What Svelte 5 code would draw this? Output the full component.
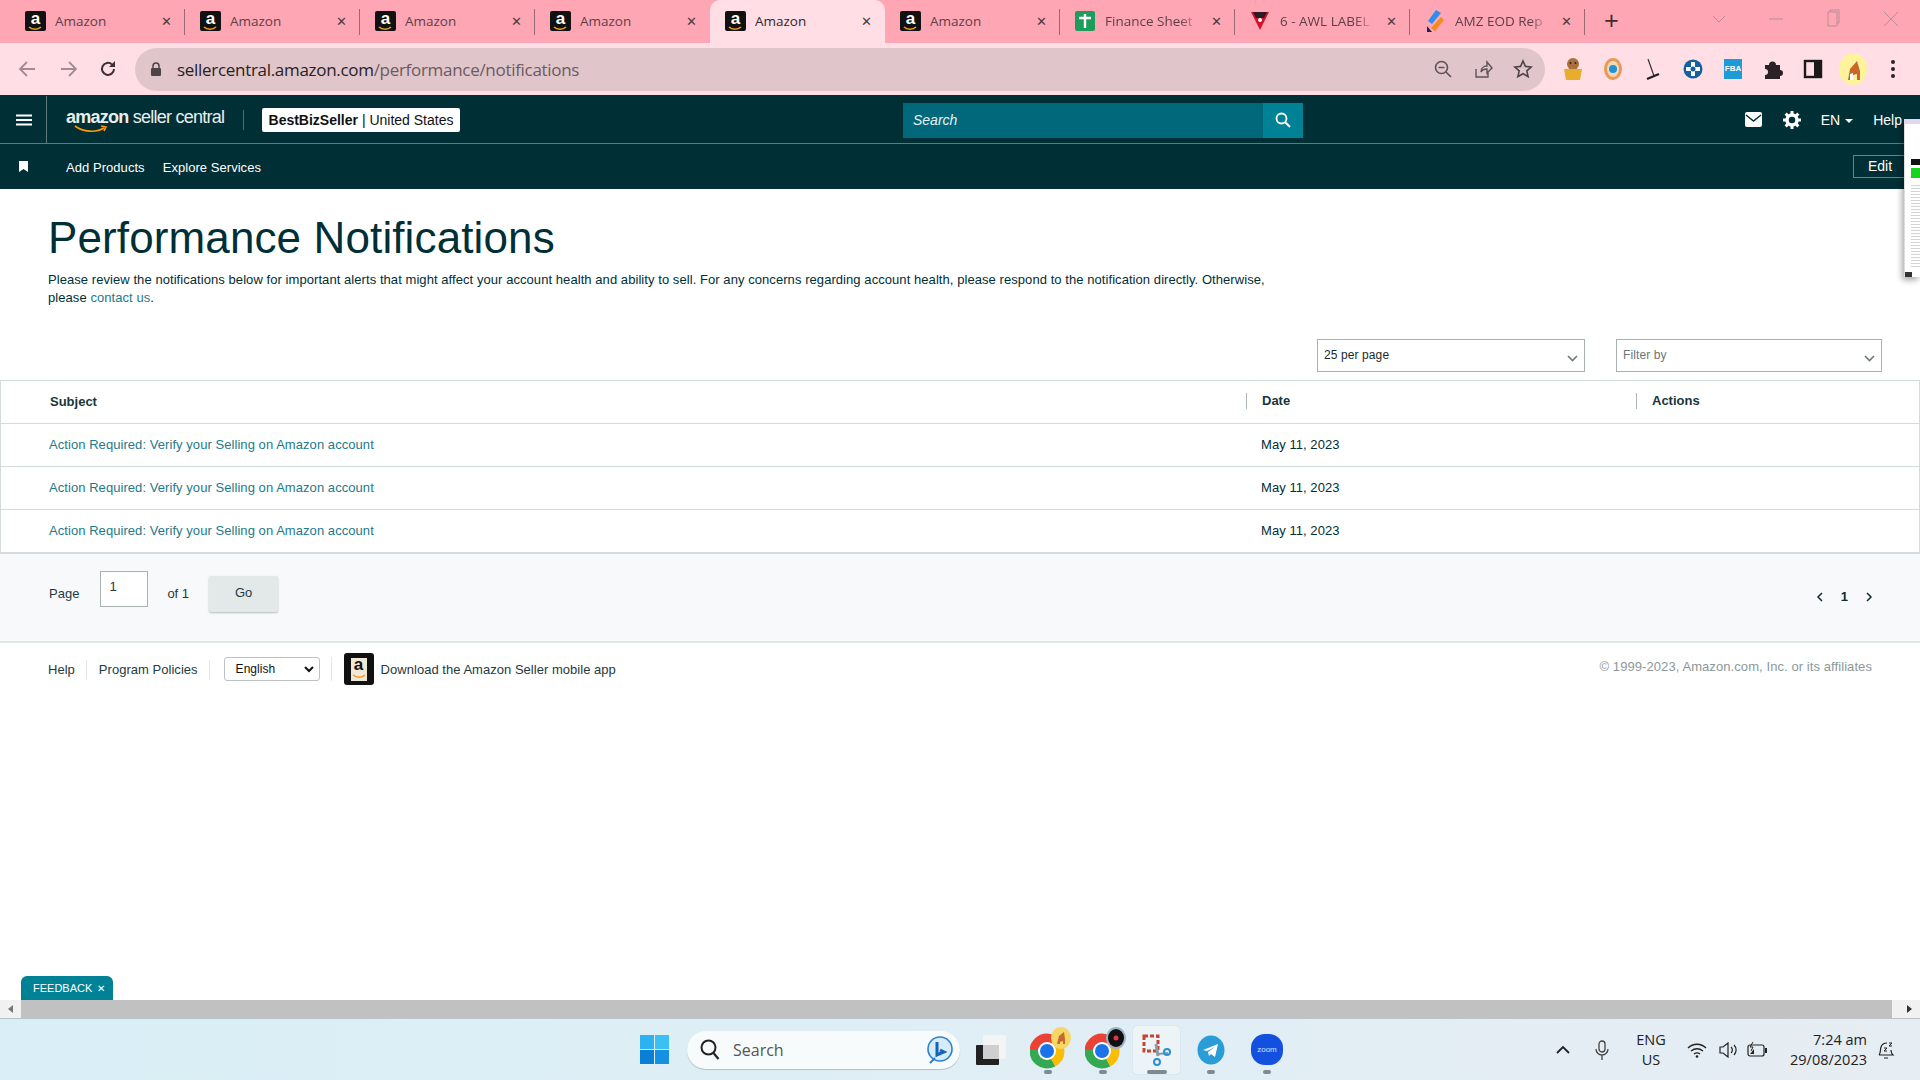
<script>
  const tabs = [
    { title: "Amazon", icon: "amazon" },
    { title: "Amazon", icon: "amazon" },
    { title: "Amazon", icon: "amazon" },
    { title: "Amazon", icon: "amazon" },
    { title: "Amazon", icon: "amazon", active: true },
    { title: "Amazon", icon: "amazon" },
    { title: "Finance Sheet", icon: "sheet", fade: true },
    { title: "6 - AWL LABEL", icon: "awl", fade: true },
    { title: "AMZ EOD Rep", icon: "eod", fade: true },
  ];

  const rows = [
    { subject: "Action Required: Verify your Selling on Amazon account", date: "May 11, 2023" },
    { subject: "Action Required: Verify your Selling on Amazon account", date: "May 11, 2023" },
    { subject: "Action Required: Verify your Selling on Amazon account", date: "May 11, 2023" },
  ];
</script>

{#snippet chrome()}
  <svg class="tb-app" width="36" height="38" viewBox="0 0 36 38">
    <circle cx="17" cy="20" r="13" fill="none" stroke="#ea4335" stroke-width="9" stroke-dasharray="28 54" stroke-dashoffset="42" />
    <circle cx="17" cy="20" r="13" fill="none" stroke="#fbbc04" stroke-width="9" stroke-dasharray="28 54" stroke-dashoffset="14" />
    <circle cx="17" cy="20" r="13" fill="none" stroke="#34a853" stroke-width="9" stroke-dasharray="28 54" stroke-dashoffset="-14" />
    <circle cx="17" cy="20" r="9" fill="#fff" />
    <circle cx="17" cy="20" r="7" fill="#1a73e8" />
  </svg>
{/snippet}

<div class="screen">
  <div class="tabstrip">
    {#each tabs as tab, i}
      <div class="tab" class:active={tab.active} class:nosep={tab.active || (tabs[i + 1] && tabs[i + 1].active)}>
        {#if tab.icon === "amazon"}
          <span class="fav-a">a<svg class="fav-smile" width="14" height="5" viewBox="0 0 14 5"><path d="M1 1c3 3 9 3 12 0" fill="none" stroke="#f29a1f" stroke-width="1.6" /></svg></span>
        {:else if tab.icon === "sheet"}
          <svg class="fav" width="20" height="20" viewBox="0 0 20 20"><rect width="20" height="20" rx="2" fill="#1e9c5b" /><path d="M4 7h12M10 3v14" stroke="#fff" stroke-width="2.4" /></svg>
        {:else if tab.icon === "awl"}
          <svg class="fav" width="20" height="20" viewBox="0 0 20 20"><path d="M1 1h18L10 19z" fill="#d3122a" /><path d="M3 1h14l-3 6H6z" fill="#2a1a2a" /><circle cx="10" cy="9" r="2" fill="#fff" /></svg>
        {:else}
          <svg class="fav" width="20" height="24" viewBox="0 0 20 24"><path d="M11 1l5 3-9 11-4-3z" fill="#2f8df0" /><path d="M16 8l3 3-9 11-4-3z" fill="#f58a1f" /><path d="M2 17l5 6H2z" fill="#25205a" /></svg>
        {/if}
        <span class="tab-title" class:fade={tab.fade}>{tab.title}</span>
        <span class="tab-x">✕</span>
      </div>
    {/each}
    <span class="newtab">+</span>
    <div class="winctl">
      <svg width="14" height="10" viewBox="0 0 14 10"><path d="M1 2l6 6 6-6" fill="none" stroke="#b98d96" /></svg>
      <svg class="ctl-min" width="14" height="10" viewBox="0 0 14 10"><path d="M0 5h14" stroke="#b98d96" /></svg>
      <svg class="ctl-max" width="14" height="20" viewBox="0 0 14 20"><path d="M2 3h9v14H2zM4 3V1h9v13h-2" fill="none" stroke="#b98d96" /></svg>
      <svg class="ctl-close" width="14" height="14" viewBox="0 0 14 14"><path d="M0 0l14 14M14 0L0 14" stroke="#b98d96" /></svg>
    </div>
  </div>

  <div class="toolbar">
    <svg class="nav-ic" width="20" height="20" viewBox="0 0 20 20"><path d="M17 10H3m6-7l-7 7 7 7" fill="none" stroke="#a38b91" stroke-width="1.8" /></svg>
    <svg class="nav-ic" width="20" height="20" viewBox="0 0 20 20"><path d="M3 10h14m-6-7l7 7-7 7" fill="none" stroke="#a38b91" stroke-width="1.8" /></svg>
    <svg class="nav-ic" width="20" height="20" viewBox="0 0 20 20"><path d="M16 10a6 6 0 1 1-2-4.6" fill="none" stroke="#3a3035" stroke-width="2" /><path d="M17 2v6h-6z" fill="#3a3035" /></svg>
    <div class="omnibox">
      <svg width="12" height="14" viewBox="0 0 12 14"><path d="M3 6V4a3 3 0 0 1 6 0v2" fill="none" stroke="#4e4448" stroke-width="1.5" /><rect x="1" y="6" width="10" height="8" rx="1" fill="#4e4448" /></svg>
      <span class="url"><b>sellercentral.amazon.com</b>/performance/notifications</span>
      <div class="omni-icons">
        <svg width="20" height="20" viewBox="0 0 20 20"><circle cx="8.5" cy="8.5" r="6" fill="none" stroke="#5c5357" stroke-width="1.6" /><path d="M5.5 8.5h6M13 13l5 5" stroke="#5c5357" stroke-width="1.6" /></svg>
        <svg width="20" height="20" viewBox="0 0 20 20"><path d="M3 10v8h12v-5M8 13c0-4 3-6 6-6V3l5 6-5 5v-4c-3 0-5 1-6 3z" fill="none" stroke="#5c5357" stroke-width="1.4" /></svg>
        <svg width="20" height="20" viewBox="0 0 20 20"><path d="M10 2l2.4 5.4 5.8.6-4.4 3.900 1.300 5.700L10 14.700l-5.100 2.900 1.300-5.700L1.800 8l5.800-.6z" fill="none" stroke="#4e4448" stroke-width="1.6" /></svg>
      </div>
    </div>
    <div class="exts">
      <svg width="22" height="24" viewBox="0 0 22 24"><ellipse cx="11" cy="7" rx="6" ry="6" fill="#a9703a" /><circle cx="8.500" cy="6" r="1" fill="#222" /><circle cx="13.500" cy="6" r="1" fill="#222" /><path d="M2 12h18l-2 11H4z" fill="#e8ad2c" /></svg>
      <svg width="22" height="24" viewBox="0 0 22 24"><ellipse cx="11" cy="12" rx="9" ry="11" fill="#e59a5a" /><ellipse cx="11" cy="12" rx="6" ry="8" fill="#f3d8b8" /><circle cx="11" cy="12" r="4" fill="#1e93d8" /></svg>
      <svg width="22" height="24" viewBox="0 0 22 24"><path d="M6 2l6 17" stroke="#333" stroke-width="1.2" /><path d="M5 22l12-5" stroke="#222" stroke-width="2.400" /></svg>
      <svg width="22" height="24" viewBox="0 0 22 24"><circle cx="11" cy="12" r="9.500" fill="#14609c" /><path d="M11 5v14M4 12h14" stroke="#fff" stroke-width="4" /><circle cx="11" cy="12" r="2.500" fill="#14609c" /></svg>
      <span class="fba">FBA</span>
      <svg width="22" height="24" viewBox="0 0 22 24"><path d="M3 8h4a3 3 0 0 1 7 0h4v5a3 3 0 0 1 0 6v3H3v-4a3 3 0 0 0 0-6z" fill="#2a2226" /></svg>
      <svg width="22" height="24" viewBox="0 0 22 24"><rect x="3" y="4" width="16" height="16" fill="none" stroke="#1a1a1a" stroke-width="2.400" /><rect x="12" y="4" width="7" height="16" fill="#1a1a1a" /></svg>
      <svg width="28" height="32" viewBox="0 0 28 32"><ellipse cx="14" cy="16" rx="14" ry="16" fill="#fdf39a" /><path d="M9 27l2-11 7-8 3 10v9h-3v-6l-4 1v5z" fill="#c9682e" /><path d="M11 27v-6l3-1v7z" fill="#fff" /></svg>
      <svg width="22" height="24" viewBox="0 0 22 24"><circle cx="11" cy="5" r="2" fill="#2a2226" /><circle cx="11" cy="12" r="2" fill="#2a2226" /><circle cx="11" cy="19" r="2" fill="#2a2226" /></svg>
    </div>
  </div>

  <header class="topbar">
    <div class="menu-cell">
      <svg width="16" height="12" viewBox="0 0 16 12"><path d="M0 1.500h16M0 6h16M0 10.500h16" stroke="#fff" stroke-width="1.800" /></svg>
    </div>
    <div class="logo">
      <b>amazon</b> seller central
      <svg class="smile" width="34" height="8" viewBox="0 0 34 8"><path d="M1 1c8 6 21 7 29 2M27 1l5 1-2 4" fill="none" stroke="#ff9900" stroke-width="1.600" /></svg>
    </div>
    <span class="logo-sep"></span>
    <div class="account"><b>BestBizSeller</b> | United States</div>
    <div class="search">
      <span class="search-field">Search</span>
      <span class="search-btn">
        <svg width="16" height="16" viewBox="0 0 16 16"><circle cx="6.500" cy="6.500" r="5" fill="none" stroke="#fff" stroke-width="1.800" /><path d="M10 10l5 5" stroke="#fff" stroke-width="2" /></svg>
      </span>
    </div>
    <div class="top-right">
      <svg width="17" height="15" viewBox="0 0 17 15"><rect width="17" height="15" rx="2" fill="#fff" /><path d="M1 3l7.500 6L16 3" fill="none" stroke="#002f36" stroke-width="1.500" /></svg>
      <svg class="gear" width="18" height="18" viewBox="0 0 18 18"><circle cx="9" cy="9" r="5" fill="none" stroke="#fff" stroke-width="3.500" /><path d="M9 0v4M9 14v4M0 9h4M14 9h4M2.600 2.600l3 3M12.400 12.400l3 3M15.400 2.600l-3 3M5.600 12.400l-3 3" stroke="#fff" stroke-width="3" /></svg>
      <span class="lang">EN<i class="caret"></i></span>
      <span class="help">Help</span>
    </div>
  </header>

  <nav class="navbar">
    <svg class="bookmark" width="9" height="11" viewBox="0 0 9 11"><path d="M0 0h9v11L4.500 8 0 11z" fill="#fff" /></svg>
    <span class="nav-link">Add Products</span>
    <span class="nav-link">Explore Services</span>
    <span class="edit">Edit</span>
  </nav>

  <main class="page">
    <div class="intro">
      <h1>Performance Notifications</h1>
      <p>Please review the notifications below for important alerts that might affect your account health and ability to sell. For any concerns regarding account health, please respond to the notification directly. Otherwise, please <a href="#top">contact us</a>.</p>
    </div>

    <div class="filters">
      <div class="dropdown per-page">25 per page
        <svg width="11" height="7" viewBox="0 0 11 7"><path d="M1 1l4.500 4.500L10 1" fill="none" stroke="#6c7778" stroke-width="1.600" /></svg>
      </div>
      <div class="dropdown filter-by">Filter by
        <svg width="11" height="7" viewBox="0 0 11 7"><path d="M1 1l4.500 4.500L10 1" fill="none" stroke="#6c7778" stroke-width="1.600" /></svg>
      </div>
    </div>

    <div class="table">
      <div class="row head">
        <div class="cell subject">Subject</div>
        <div class="cell col-sep">Date</div>
        <div class="cell col-sep">Actions</div>
      </div>
      {#each rows as row}
        <div class="row">
          <div class="cell"><a href="#top">{row.subject}</a></div>
          <div class="cell date">{row.date}</div>
          <div class="cell"></div>
        </div>
      {/each}
    </div>

    <div class="pager">
      <span class="page-label">Page</span>
      <span class="page-input">1</span>
      <span class="of">of 1</span>
      <span class="go">Go</span>
      <div class="pages">
        <svg width="8" height="10" viewBox="0 0 8 10"><path d="M6 1L2 5l4 4" fill="none" stroke="#0f2a2e" stroke-width="1.500" /></svg>
        <b>1</b>
        <svg width="8" height="10" viewBox="0 0 8 10"><path d="M2 1l4 4-4 4" fill="none" stroke="#0f2a2e" stroke-width="1.500" /></svg>
      </div>
    </div>

    <footer class="footer">
      <span class="foot-link first">Help</span>
      <span class="foot-link">Program Policies</span>
      <div class="foot-lang">
        <span class="lang-select">English
          <svg width="10" height="7" viewBox="0 0 10 7"><path d="M1 1l4 4 4-4" fill="none" stroke="#111" stroke-width="2" /></svg>
        </span>
      </div>
      <span class="app-icon">a<svg width="14" height="5" viewBox="0 0 14 5"><path d="M1 1c3 3 9 3 12 0" fill="none" stroke="#f29a1f" stroke-width="1.400" /></svg></span>
      <span class="app-text">Download the Amazon Seller mobile app</span>
      <span class="copyright">© 1999-2023, Amazon.com, Inc. or its affiliates</span>
    </footer>

    <div class="thumb">
      <span class="th-top"></span>
      <span class="th-black"></span>
      <span class="th-green"></span>
      <span class="th-lines"></span>
      <span class="th-start"></span>
    </div>
    <div class="feedback">FEEDBACK <span>✕</span></div>
  </main>

  <div class="hscroll">
    <svg width="21" height="18" viewBox="0 0 21 18"><path d="M13 5v8L8 9z" fill="#777" /></svg>
    <div class="hthumb"></div>
    <svg width="28" height="18" viewBox="0 0 28 18"><path d="M15 5v8l5-4z" fill="#333" /></svg>
  </div>

  <div class="taskbar">
    <svg class="winlogo" width="29" height="29" viewBox="0 0 29 29">
      <rect width="14" height="14" fill="#2cb2f0" /><rect x="15" width="14" height="14" fill="#3cc0f4" />
      <rect y="15" width="14" height="14" fill="#0a7fd6" /><rect x="15" y="15" width="14" height="14" fill="#1590e2" />
    </svg>
    <div class="tb-search">
      <svg width="20" height="21" viewBox="0 0 20 21"><circle cx="8.500" cy="8.500" r="7" fill="none" stroke="#222" stroke-width="2" /><path d="M13.500 14l5 6" stroke="#222" stroke-width="2.200" /></svg>
      <span>Search</span>
      <svg class="bing" width="26" height="28" viewBox="0 0 26 28"><circle cx="13" cy="13" r="12" fill="#d7ecfa" stroke="#2a7fd0" stroke-width="1.600" /><path d="M10 6v13l7-3-4-2" fill="none" stroke="#1464b8" stroke-width="3" /><path d="M3 27l5-5" stroke="#2a7fd0" stroke-width="2" /></svg>
    </div>
    <svg class="tb-app squares" width="30" height="30" viewBox="0 0 30 30"><rect x="7" y="0" width="23" height="24" rx="2" fill="#f4f4f4" /><rect x="0" y="10" width="23" height="20" rx="1" fill="#222" /><rect x="7" y="10" width="16" height="14" fill="#cfcfcf" /></svg>

    <div class="tb-slot first-chrome">
      {@render chrome()}
      <svg class="tb-badge" width="20" height="22" viewBox="0 0 20 22"><ellipse cx="10" cy="11" rx="10" ry="11" fill="#f6d765" /><path d="M6 17l2-8 5-4 1 7v5h-2v-3l-3 1v2z" fill="#c9682e" /></svg>
      <i class="dot"></i>
    </div>
    <div class="tb-slot second-chrome">
      {@render chrome()}
      <svg class="tb-badge" width="20" height="22" viewBox="0 0 20 22"><ellipse cx="10" cy="11" rx="10" ry="11" fill="#9fb3c6" /><ellipse cx="10" cy="11" rx="8" ry="9" fill="#111" /><circle cx="10" cy="11" r="2.500" fill="#e2344a" /></svg>
      <i class="dot"></i>
    </div>
    <div class="tb-snip">
      <svg width="30" height="32" viewBox="0 0 30 32">
        <rect x="2" y="2" width="14" height="15" fill="none" stroke="#c8432e" stroke-width="3" stroke-dasharray="4 2" />
        <path d="M14 10l2 12" stroke="#8c9aa6" stroke-width="3" /><path d="M16 20l10-1" stroke="#8c9aa6" stroke-width="2" />
        <circle cx="25" cy="18" r="3" fill="none" stroke="#2b8fd6" stroke-width="2" /><circle cx="15" cy="28" r="3" fill="none" stroke="#2b8fd6" stroke-width="2" />
      </svg>
      <i class="dot wide"></i>
    </div>
    <div class="tb-slot telegram">
      <svg width="28" height="30" viewBox="0 0 28 30"><ellipse cx="14" cy="15" rx="13.500" ry="14.500" fill="#2b9dd6" /><path d="M6 15l15-6-3 13-4-3-2 2-1-4 7-5-8 4z" fill="#fff" /></svg>
      <i class="dot"></i>
    </div>
    <div class="tb-slot zoom">
      <span class="zoom-ic">zoom</span>
      <i class="dot"></i>
    </div>

    <div class="tray">
      <svg class="t-caret" width="14" height="9" viewBox="0 0 14 9"><path d="M1 8l6-6 6 6" fill="none" stroke="#222" stroke-width="1.800" /></svg>
      <svg class="t-mic" width="14" height="20" viewBox="0 0 14 20"><rect x="4" y="1" width="6" height="11" rx="3" fill="none" stroke="#444" stroke-width="1.300" /><path d="M1 9a6 6 0 0 0 12 0M7 15v5" fill="none" stroke="#444" stroke-width="1.300" /></svg>
      <div class="t-lang">ENG<br />US</div>
      <svg class="t-wifi" width="20" height="16" viewBox="0 0 20 16"><path d="M1 6c5-5 13-5 18 0M4 9c4-3 8-3 12 0M7 12c2-1.500 4-1.500 6 0" fill="none" stroke="#222" stroke-width="1.300" /><circle cx="10" cy="14.500" r="1.300" fill="#222" /></svg>
      <svg class="t-vol" width="20" height="16" viewBox="0 0 20 16"><path d="M1 5h3l5-4v14l-5-4H1z" fill="none" stroke="#222" stroke-width="1.200" /><path d="M12 5a4 4 0 0 1 0 6M15 3a7 7 0 0 1 0 10" fill="none" stroke="#222" stroke-width="1.200" /></svg>
      <svg class="t-bat" width="21" height="16" viewBox="0 0 21 16"><rect x="1" y="3" width="16" height="11" rx="2" fill="none" stroke="#222" stroke-width="1.200" /><path d="M3 12l4-5v5z" fill="#222" /><rect x="18" y="6" width="2" height="5" fill="#222" /><path d="M6 0L3 5h3L4 9" fill="none" stroke="#222" /></svg>
      <div class="t-clock"><div>7:24 am</div><div>29/08/2023</div></div>
      <svg class="t-bell" width="18" height="20" viewBox="0 0 18 20"><path d="M2 15c2-2 1-5 2-8s4-4 6-4M2 15h14c-1-1-2-2-2-5M7 18h4" fill="none" stroke="#222" stroke-width="1.200" /><path d="M7 8h3l-3 3h3M12 3h3l-3 3h3" fill="none" stroke="#222" /></svg>
    </div>
  </div>
</div>

<style>
  :global(body) {
    margin: 0;
    font-family: "Liberation Sans", Arial, sans-serif;
    color: #002f36;
  }
  .screen {
    width: 1920px;
    height: 1080px;
    display: flex;
    flex-direction: column;
    overflow: hidden;
  }

  /* browser chrome */
  .tabstrip {
    height: 43px;
    flex: none;
    display: flex;
    align-items: stretch;
    padding-left: 10px;
    background: #ffa6b5;
    box-sizing: border-box;
  }
  .tab {
    width: 175px;
    flex: none;
    box-sizing: border-box;
    display: flex;
    align-items: center;
    padding: 0 0 2px 15px;
    position: relative;
    font-family: "Open Sans", sans-serif;
    font-size: 13.5px;
    color: #5c4046;
  }
  .tab::after {
    content: "";
    position: absolute;
    right: 0;
    top: 9px;
    height: 26px;
    width: 1px;
    background: #9a6a74;
  }
  .tab.nosep::after {
    display: none;
  }
  .tab.active {
    background: #ffdfe5;
    border-radius: 10px 10px 0 0;
    color: #33262a;
  }
  .fav-a {
    width: 21px;
    height: 20px;
    flex: none;
    background: #111;
    border-radius: 2px;
    color: #fff;
    font: bold 17px/15px "Liberation Sans", sans-serif;
    text-align: center;
    position: relative;
    display: block;
  }
  .fav-smile {
    position: absolute;
    left: 3px;
    bottom: 0;
  }
  .fav {
    flex: none;
    margin-right: 1px;
  }
  .tab-title {
    margin-left: 9px;
    width: 94px;
    flex: none;
    white-space: nowrap;
    overflow: hidden;
  }
  .tab-title.fade {
    -webkit-mask-image: linear-gradient(to right, #000 80%, transparent);
    mask-image: linear-gradient(to right, #000 80%, transparent);
  }
  .tab-x {
    font-size: 13px;
    color: #4a3a3e;
    margin-left: 12px;
  }
  .newtab {
    font-family: "Open Sans", sans-serif;
    font-size: 26px;
    line-height: 40px;
    color: #3c2c30;
    margin-left: 19px;
  }
  .winctl {
    margin-left: auto;
    display: flex;
    align-items: center;
    padding: 0 22px 6px 0;
  }
  .ctl-min {
    margin-left: 43px;
  }
  .ctl-max {
    margin-left: 43px;
  }
  .ctl-close {
    margin-left: 44px;
  }

  .toolbar {
    height: 52px;
    flex: none;
    box-sizing: border-box;
    display: flex;
    align-items: center;
    padding: 0 0 0 18px;
    background: #ffdfe5;
  }
  .nav-ic {
    margin-right: 20px;
  }
  .omnibox {
    width: 1410px;
    height: 43px;
    margin-left: -3px;
    box-sizing: border-box;
    display: flex;
    align-items: center;
    padding: 0 12px 0 15px;
    background: #e0c6cb;
    border-radius: 22px;
  }
  .url {
    margin-left: 15px;
    font-family: "Open Sans", sans-serif;
    font-size: 17px;
    letter-spacing: -0.3px;
    color: #6b5a5f;
  }
  .url b {
    font-weight: 400;
    color: #2a2024;
  }
  .omni-icons {
    margin-left: auto;
    display: flex;
    gap: 20px;
  }
  .exts {
    display: flex;
    align-items: center;
    gap: 18px;
    margin-left: 17px;
  }
  .exts svg:nth-child(8) {
    margin: 0 -3px;
  }
  .fba {
    width: 18px;
    height: 20px;
    margin: 0 2px;
    background: #1e9ad6;
    color: #fff;
    font-size: 8px;
    font-weight: bold;
    line-height: 20px;
    text-align: center;
  }

  /* seller central header */
  .topbar {
    height: 49px;
    flex: none;
    box-sizing: border-box;
    display: flex;
    align-items: center;
    padding-top: 1px;
    background: #002f36;
    border-bottom: 1px solid #5f7a7e;
  }
  .menu-cell {
    width: 47px;
    height: 47px;
    box-sizing: border-box;
    flex: none;
    display: flex;
    align-items: center;
    padding-left: 16px;
    border-right: 1px solid #5f7a7e;
  }
  .logo {
    position: relative;
    margin-left: 19px;
    width: 159px;
    flex: none;
    white-space: nowrap;
    font-size: 18px;
    letter-spacing: -0.75px;
    color: #e8eeee;
    padding-bottom: 5px;
  }
  .smile {
    position: absolute;
    left: 8px;
    bottom: 0;
  }
  .logo-sep {
    width: 1px;
    height: 20px;
    margin-left: 18px;
    background: #4f6c70;
  }
  .account {
    margin-left: 18px;
    width: 198px;
    height: 24px;
    box-sizing: border-box;
    background: #fff;
    border-radius: 2px;
    color: #111;
    font-size: 14px;
    line-height: 24px;
    text-align: center;
    white-space: nowrap;
  }
  .search {
    margin: 1px 0 0 443px;
    width: 400px;
    height: 35px;
    flex: none;
    display: flex;
  }
  .search-field {
    flex: 1;
    box-sizing: border-box;
    background: #00687a;
    color: #e6f0f1;
    font-size: 14px;
    font-style: italic;
    line-height: 35px;
    padding-left: 10px;
  }
  .search-btn {
    width: 40px;
    background: #008296;
    display: flex;
    align-items: center;
    justify-content: center;
  }
  .top-right {
    margin-left: auto;
    display: flex;
    align-items: center;
    color: #fff;
    font-size: 14px;
    padding-right: 18px;
  }
  .gear {
    margin-left: 21px;
  }
  .lang {
    margin-left: 20px;
  }
  .caret {
    display: inline-block;
    margin-left: 5px;
    vertical-align: 2px;
    border: 4px solid transparent;
    border-top-color: #fff;
    border-bottom: 0;
  }
  .help {
    margin-left: 20px;
  }

  .navbar {
    height: 45px;
    flex: none;
    box-sizing: border-box;
    display: flex;
    align-items: center;
    padding: 2px 0 0 19px;
    background: #002f36;
    color: #fff;
    font-size: 13px;
  }
  .bookmark {
    margin: -2px 38px 0 0;
  }
  .nav-link {
    margin-right: 18px;
    letter-spacing: 0.05px;
  }
  .edit {
    margin-left: auto;
    width: 52px;
    height: 23px;
    box-sizing: border-box;
    margin-top: -3px;
    margin-right: 15px;
    border: 1px solid #6d8487;
    font-size: 14px;
    line-height: 21px;
    padding-left: 14px;
  }

  /* page */
  .page {
    flex: 1;
    min-height: 0;
    position: relative;
    background: #fff;
  }
  .intro {
    padding: 23px 0 0 48px;
    height: 150px;
    box-sizing: border-box;
  }
  h1 {
    margin: 0;
    font-size: 44px;
    font-weight: 400;
    line-height: 52px;
    letter-spacing: 0.12px;
  }
  p {
    margin: 7px 0 0;
    width: 1235px;
    font-size: 13px;
    line-height: 18px;
    letter-spacing: 0.065px;
  }
  a {
    color: #1d7a8b;
    text-decoration: none;
  }
  .filters {
    display: flex;
    justify-content: flex-end;
    gap: 31px;
    padding-right: 38px;
    height: 41px;
  }
  .dropdown {
    height: 33px;
    box-sizing: border-box;
    border: 1px solid #a9b0b0;
    font-size: 12px;
    line-height: 31px;
    padding-left: 6px;
    position: relative;
    background: #fff;
    letter-spacing: 0.1px;
  }
  .dropdown svg {
    position: absolute;
    right: 6px;
    top: 15px;
  }
  .per-page {
    width: 268px;
    color: #1a2a2c;
  }
  .filter-by {
    width: 266px;
    color: #6c7778;
  }
  .table {
    border: 1px solid #d5dbdb;
    border-bottom-width: 2px;
  }
  .row {
    display: grid;
    grid-template-columns: 1245px 390px 1fr;
    height: 43px;
    box-sizing: border-box;
    padding-bottom: 2px;
    border-top: 1px solid #d5dbdb;
    font-size: 13px;
    align-items: center;
    letter-spacing: 0.06px;
  }
  .row.head {
    height: 42px;
    border-top: 0;
    font-weight: bold;
    color: #18363b;
    letter-spacing: 0;
  }
  .cell {
    padding-left: 48px;
  }
  .cell.subject {
    padding-left: 49px;
  }
  .cell.date {
    padding-left: 15px;
  }
  .col-sep {
    padding-left: 15px;
    border-left: 1px solid #aab5b6;
    line-height: 16px;
  }
  .pager {
    height: 89px;
    box-sizing: border-box;
    display: flex;
    align-items: flex-start;
    background: #f7f9fa;
    border-bottom: 2px solid #e3e6e6;
    padding: 17px 47px 0 49px;
    font-size: 13px;
    color: #1f3b40;
  }
  .page-label {
    margin-top: 15px;
  }
  .page-input {
    margin-left: 21px;
    width: 48px;
    height: 36px;
    box-sizing: border-box;
    border: 1px solid #a9b0b0;
    background: #fff;
    padding: 7px 0 0 8px;
    font-size: 13px;
  }
  .of {
    margin: 15px 0 0 19px;
  }
  .go {
    margin: 5px 0 0 20px;
    width: 69px;
    height: 36px;
    background: #e3e9e9;
    border-radius: 2px;
    box-shadow: 0 1px 2px rgba(0, 0, 0, 0.25);
    text-align: center;
    line-height: 34px;
  }
  .pages {
    margin: 18px 0 0 auto;
    display: flex;
    align-items: center;
    gap: 17px;
    font-size: 13px;
    color: #0f2a2e;
  }
  .footer {
    display: flex;
    align-items: center;
    padding: 10px 48px 0;
    font-size: 13px;
    color: #1f3b40;
    letter-spacing: 0.03px;
  }
  .foot-link {
    padding: 2px 11px 2px 12px;
    border-right: 1px solid #e3e6e6;
  }
  .foot-link.first {
    padding-left: 0;
  }
  .foot-lang {
    padding: 0 11px 0 14px;
    border-right: 1px solid #e3e6e6;
  }
  .lang-select {
    width: 96px;
    height: 24px;
    box-sizing: border-box;
    display: flex;
    align-items: center;
    justify-content: space-between;
    padding: 0 5px 0 11px;
    border: 1px solid #bcc2c2;
    border-radius: 3px;
    font-size: 12px;
    color: #111;
  }
  .app-icon {
    margin-left: 12px;
    width: 30px;
    height: 32px;
    flex: none;
    background: #111;
    border-radius: 3px;
    color: #111;
    position: relative;
    font: bold 17px/24px "Liberation Sans", sans-serif;
    text-align: center;
    display: block;
    background-image: linear-gradient(#efe8d6, #efe8d6);
    background-size: 16px 23px;
    background-position: center 5px;
    background-repeat: no-repeat;
  }
  .app-icon svg {
    position: absolute;
    left: 8px;
    bottom: 6px;
  }
  .app-text {
    margin-left: 7px;
  }
  .copyright {
    margin: -5px 0 0 auto;
    color: #8c9899;
    font-size: 13px;
    letter-spacing: 0.08px;
  }
  .thumb {
    position: absolute;
    right: 0;
    top: -70px;
    width: 16px;
    height: 158px;
    background: #fff;
    box-shadow: -2px 3px 6px rgba(0, 0, 0, 0.35);
    border-left: 1px solid #ddd;
    box-sizing: border-box;
  }
  .th-top {
    position: absolute;
    left: 0;
    right: 0;
    top: 0;
    height: 5px;
    background: #e3d6f2;
  }
  .th-black {
    position: absolute;
    left: 6px;
    top: 40px;
    right: 0;
    height: 6px;
    background: #111;
  }
  .th-green {
    position: absolute;
    left: 6px;
    top: 49px;
    right: 0;
    height: 10px;
    background: #19d41e;
  }
  .th-lines {
    position: absolute;
    left: 6px;
    right: 0;
    top: 64px;
    height: 85px;
    background: repeating-linear-gradient(#fff 0 2px, #d4d4d4 2px 3px);
  }
  .th-start {
    position: absolute;
    left: 0;
    bottom: 0;
    width: 7px;
    height: 5px;
    background: #333;
  }
  .feedback {
    position: absolute;
    left: 21px;
    bottom: 0;
    width: 92px;
    height: 24px;
    box-sizing: border-box;
    padding-left: 12px;
    background: #008296;
    border-radius: 6px 6px 0 0;
    color: #fff;
    font-size: 11px;
    line-height: 24px;
    white-space: nowrap;
  }
  .feedback span {
    margin-left: 2px;
    font-size: 10px;
  }
  .hscroll {
    height: 18px;
    flex: none;
    display: flex;
    background: #f1f1f1;
  }
  .hthumb {
    flex: 1;
    background: #c1c1c1;
  }

  /* windows taskbar */
  .taskbar {
    height: 62px;
    flex: none;
    box-sizing: border-box;
    display: flex;
    align-items: center;
    border-top: 1px solid #b9c2c6;
    background: linear-gradient(90deg, #d9eef7, #dfeef5 45%, #e6edf3);
    padding-left: 640px;
  }
  .winlogo {
    flex: none;
  }
  .tb-search {
    margin-left: 18px;
    width: 273px;
    height: 38px;
    box-sizing: border-box;
    display: flex;
    align-items: center;
    padding: 0 7px 0 13px;
    background: #f8fbfc;
    border-radius: 19px;
    box-shadow: 0 1px 1px rgba(0, 0, 0, 0.2);
    font-family: "Open Sans", sans-serif;
    font-size: 16px;
    color: #555;
  }
  .tb-search span {
    margin-left: 13px;
  }
  .bing {
    margin-left: auto;
  }
  .tb-app {
    display: block;
    flex: none;
  }
  .squares {
    margin-left: 16px;
  }
  .tb-slot {
    position: relative;
    flex: none;
    height: 48px;
    display: flex;
    justify-content: center;
    align-items: center;
  }
  .first-chrome {
    margin-left: 22px;
    width: 40px;
  }
  .second-chrome {
    margin-left: 15px;
    width: 40px;
  }
  .tb-badge {
    position: absolute;
    top: 1px;
    right: -3px;
  }
  .dot {
    position: absolute;
    bottom: 0;
    left: 50%;
    width: 8px;
    height: 4px;
    margin-left: -4px;
    border-radius: 2px;
    background: #7c8a92;
  }
  .dot.wide {
    width: 20px;
    margin-left: -10px;
  }
  .tb-snip {
    position: relative;
    margin-left: 10px;
    width: 47px;
    height: 48px;
    flex: none;
    display: flex;
    justify-content: center;
    align-items: center;
    background: #edf4f8;
    border-radius: 4px;
    box-shadow: 0 0 1px rgba(0, 0, 0, 0.2);
  }
  .telegram {
    margin-left: 17px;
    width: 28px;
  }
  .zoom {
    margin-left: 26px;
    width: 32px;
  }
  .zoom-ic {
    width: 32px;
    height: 31px;
    border-radius: 14px;
    background: #1450e0;
    color: #d4e0ff;
    font-size: 8px;
    line-height: 31px;
    text-align: center;
  }
  .tray {
    display: flex;
    align-items: center;
    margin-left: 273px;
    font-family: "Open Sans", sans-serif;
    color: #222;
    font-size: 14.500px;
  }
  .t-mic {
    margin-left: 25px;
  }
  .t-lang {
    margin-left: 22px;
    width: 40px;
    text-align: center;
    line-height: 20px;
    white-space: nowrap;
  }
  .t-wifi {
    margin-left: 16px;
  }
  .t-vol {
    margin-left: 12px;
  }
  .t-bat {
    margin-left: 8px;
  }
  .t-clock {
    margin-left: 21px;
    width: 78px;
    text-align: right;
    line-height: 20px;
    white-space: nowrap;
  }
  .t-bell {
    margin-left: 10px;
  }
</style>
